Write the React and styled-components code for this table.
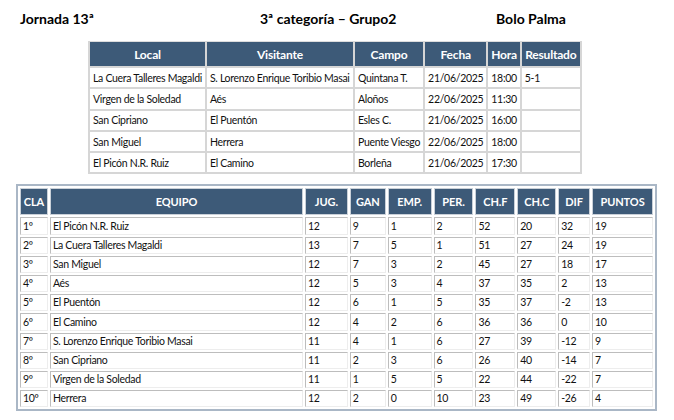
import React from "react";
import styled, { createGlobalStyle } from "styled-components";

const GlobalStyle = createGlobalStyle`
  html, body {
    margin: 0;
    padding: 0;
    background: #ffffff;
  }
  body {
    font-family: Lato, "Open Sans", sans-serif;
    color: #111111;
  }
`;

const matches = [
  { local: "La Cuera Talleres Magaldi", visitante: "S. Lorenzo Enrique Toribio Masai", campo: "Quintana T.", fecha: "21/06/2025", hora: "18:00", resultado: "5-1" },
  { local: "Virgen de la Soledad", visitante: "Aés", campo: "Aloños", fecha: "22/06/2025", hora: "11:30", resultado: "" },
  { local: "San Cipriano", visitante: "El Puentón", campo: "Esles C.", fecha: "21/06/2025", hora: "16:00", resultado: "" },
  { local: "San Miguel", visitante: "Herrera", campo: "Puente Viesgo", fecha: "22/06/2025", hora: "18:00", resultado: "" },
  { local: "El Picón N.R. Ruiz", visitante: "El Camino", campo: "Borleña", fecha: "21/06/2025", hora: "17:30", resultado: "" }
];

const standings = [
  ["1º", "El Picón N.R. Ruiz", 12, 9, 1, 2, 52, 20, 32, 19],
  ["2º", "La Cuera Talleres Magaldi", 13, 7, 5, 1, 51, 27, 24, 19],
  ["3º", "San Miguel", 12, 7, 3, 2, 45, 27, 18, 17],
  ["4º", "Aés", 12, 5, 3, 4, 37, 35, 2, 13],
  ["5º", "El Puentón", 12, 6, 1, 5, 35, 37, -2, 13],
  ["6º", "El Camino", 12, 4, 2, 6, 36, 36, 0, 10],
  ["7º", "S. Lorenzo Enrique Toribio Masai", 11, 4, 1, 6, 27, 39, -12, 9],
  ["8º", "San Cipriano", 11, 2, 3, 6, 26, 40, -14, 7],
  ["9º", "Virgen de la Soledad", 11, 1, 5, 5, 22, 44, -22, 7],
  ["10º", "Herrera", 12, 2, 0, 10, 23, 49, -26, 4]
];

const matchCols = [
  { label: "Local", width: 116 },
  { label: "Visitante", width: 148 },
  { label: "Campo", width: 67 },
  { label: "Fecha", width: 59 },
  { label: "Hora", width: 30 },
  { label: "Resultado", width: 60 }
];

const tableCols = [
  { label: "CLA", width: 28 },
  { label: "EQUIPO", width: 254 },
  { label: "JUG.", width: 43 },
  { label: "GAN", width: 36 },
  { label: "EMP.", width: 44 },
  { label: "PER.", width: 40 },
  { label: "CH.F", width: 40 },
  { label: "CH.C", width: 39 },
  { label: "DIF", width: 32 },
  { label: "PUNTOS", width: 61 }
];

const Page = styled.div`
  width: 674px;
  height: 420px;
  padding: 10px 0 0 20px;
  box-sizing: border-box;
  overflow: hidden;
`;

const TitleBar = styled.div`
  display: grid;
  grid-template-columns: 240px 236px auto;
  font-size: 14px;
  font-weight: 700;
  line-height: 18px;
  color: #000000;
`;

const Title = styled.span`
  white-space: nowrap;
`;

const MatchTable = styled.table`
  margin: 13px 0 0 68px;
  border-collapse: collapse;
  border: 1px solid #dddddd;
  table-layout: fixed;
  font-size: 10.5px;
  letter-spacing: -0.3px;
`;

const MatchHead = styled.th`
  height: 24px;
  padding: 0;
  background: #3d5a78;
  color: #ffffff;
  font-weight: 700;
  font-size: 12px;
  letter-spacing: -0.2px;
  text-align: center;
  border: 2px solid #d6d6d6;
  border-top: none;
`;

const MatchCell = styled.td`
  height: 19.3px;
  padding: 0 3px;
  border: 2px solid #d6d6d6;
  white-space: nowrap;
  overflow: hidden;
  color: #111111;
`;

const StandingsWrap = styled.div`
  margin: 10px 0 0 -4px;
  width: 641px;
  border: 2px solid #aab7c6;
  box-sizing: border-box;
`;

const StandingsTable = styled.table`
  border-collapse: separate;
  border-spacing: 2px;
  table-layout: fixed;
  font-size: 10.5px;
  letter-spacing: -0.3px;
`;

const StandHead = styled.th`
  height: 25px;
  padding: 0;
  background: #3d5a78;
  color: #ffffff;
  font-weight: 700;
  font-size: 11px;
  letter-spacing: -0.1px;
  text-align: center;
  border: 1px solid #c9d0d8;
`;

const StandCell = styled.td`
  height: 15.2px;
  line-height: 15px;
  padding: 0 2px;
  border-style: solid;
  border-width: 1px;
  border-color: #bdbdbd #ededed #ededed #bdbdbd;
  white-space: nowrap;
  overflow: hidden;
  color: #111111;
`;

export default function App() {
  return (
    <Page>
      <GlobalStyle />
      <TitleBar>
        <Title>Jornada 13ª</Title>
        <Title>3ª categoría – Grupo2</Title>
        <Title>Bolo Palma</Title>
      </TitleBar>

      <MatchTable>
        <colgroup>
          {matchCols.map((c) => (
            <col key={c.label} style={{ width: c.width }} />
          ))}
        </colgroup>
        <thead>
          <tr>
            {matchCols.map((c) => (
              <MatchHead key={c.label}>{c.label}</MatchHead>
            ))}
          </tr>
        </thead>
        <tbody>
          {matches.map((m) => (
            <tr key={m.local}>
              <MatchCell>{m.local}</MatchCell>
              <MatchCell>{m.visitante}</MatchCell>
              <MatchCell>{m.campo}</MatchCell>
              <MatchCell>{m.fecha}</MatchCell>
              <MatchCell>{m.hora}</MatchCell>
              <MatchCell>{m.resultado}</MatchCell>
            </tr>
          ))}
        </tbody>
      </MatchTable>

      <StandingsWrap>
        <StandingsTable>
          <colgroup>
            {tableCols.map((c) => (
              <col key={c.label} style={{ width: c.width }} />
            ))}
          </colgroup>
          <thead>
            <tr>
              {tableCols.map((c) => (
                <StandHead key={c.label}>{c.label}</StandHead>
              ))}
            </tr>
          </thead>
          <tbody>
            {standings.map((row) => (
              <tr key={row[0]}>
                {row.map((v, i) => (
                  <StandCell key={i}>{v}</StandCell>
                ))}
              </tr>
            ))}
          </tbody>
        </StandingsTable>
      </StandingsWrap>
    </Page>
  );
}
